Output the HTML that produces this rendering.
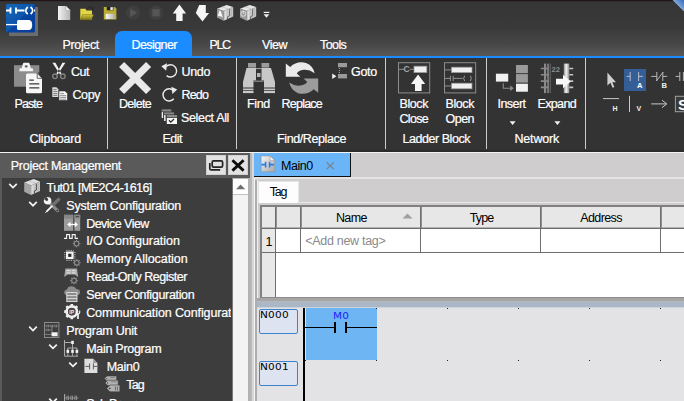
<!DOCTYPE html>
<html lang="en"><head><meta charset="utf-8"><title>Ladder Designer</title>
<style>
html,body{margin:0;padding:0;background:#333333;}
body{width:684px;height:401px;overflow:hidden;font-family:'Liberation Sans',sans-serif;}
#app{position:relative;width:684px;height:401px;overflow:hidden;background:#333333;}
#app div,#app span,#app svg{position:absolute;box-sizing:border-box;}
.t{white-space:pre;line-height:16px;height:16px;-webkit-text-stroke:0.22px currentColor;}
.sep{width:1px;top:58px;height:91px;background:#cdcdcd;}
.hl{background:#6e6e6e;height:1px;}
.vl{background:#6e6e6e;width:1px;}
.dot{width:1px;height:1px;background:#222;}

</style></head><body>
<div id="app">
<!-- title bar + tab row -->
<div style="left:0;top:0;width:684px;height:56px;background:linear-gradient(#353535 0px,#393939 28px,#474747 44px,#595959 56px);"></div>
<div style="left:0;top:0;width:684px;height:1px;background:#1e1514;"></div><div style="left:0;top:1px;width:684px;height:1px;background:#2f2d2d;"></div>
<svg style="left:670px;top:0" width="14" height="14" viewBox="0 0 14 14"><defs><linearGradient id="gTri" x1="0" y1="1" x2="1" y2="0"><stop offset="0.5" stop-color="#86a8d6"/><stop offset="1" stop-color="#2f6cc0"/></linearGradient></defs><path d="M2.5 0H14V11.5Z" fill="url(#gTri)"/></svg>
<div style="left:0;top:56px;width:684px;height:2px;background:#1a8cff;"></div>
<div style="left:115px;top:31px;width:77px;height:26px;background:#1a8cff;border-radius:7px 7px 0 0;"></div>
<!-- ribbon body -->
<div style="left:0;top:58px;width:684px;height:94px;background:#333333;"></div>
<div class="sep" style="left:107px;"></div>
<div class="sep" style="left:236px;"></div>
<div class="sep" style="left:385px;"></div>
<div class="sep" style="left:486px;"></div>
<div class="sep" style="left:585px;"></div>
<div style="left:0;top:150px;width:684px;height:2px;background:#2b2b2b;"></div><div style="left:0;top:152px;width:684px;height:1px;background:#f2f2f2;"></div>
<!-- left panel -->
<div style="left:0;top:153px;width:250px;height:25px;background:#5a5a5a;"></div>
<div style="left:0;top:178px;width:232px;height:223px;background:#3d3d3d;"></div>
<div style="left:0;top:178px;width:2px;height:223px;background:#5a5a5a;"></div>
<div style="left:232px;top:178px;width:18px;height:223px;background:#f3f3f3;border-left:1px solid #777;border-right:2px solid #b2b2b2;border-top:1px solid #b8b8b8;"></div>
<div style="left:233px;top:179px;width:15px;height:15px;background:#fefefe;"></div><div style="left:233px;top:194px;width:15px;height:1px;background:#c4c4c4;"></div>
<svg style="left:235px;top:183px" width="12" height="8" viewBox="0 0 12 8"><path d="M1 6.2L5.6 1.4L10.2 6.2Z" fill="#707070"/></svg>
<div style="left:206px;top:155px;width:20px;height:20px;background:#e2e2e2;border:1px solid #cfcfcf;"></div>
<div style="left:228px;top:155px;width:20px;height:20px;background:#e2e2e2;border:1px solid #cfcfcf;"></div>
<svg style="left:206px;top:155px" width="20" height="20" viewBox="0 0 20 20"><path d="M7.6 5.8h7.6q1.4 0 1.4 1.4v3.6q0 1.4 -1.4 1.4h-7.6q-1.4 0 -1.4 -1.4v-3.6q0 -1.4 1.4 -1.4zM3.8 8v5.4q0 1.4 1.4 1.4h9" fill="none" stroke="#222" stroke-width="1.7"/></svg>
<svg style="left:228px;top:155px" width="20" height="20" viewBox="0 0 20 20"><path d="M4.4 5.2L15.6 15.6M15.6 5.2L4.4 15.6" fill="none" stroke="#0c0c0c" stroke-width="2.8"/></svg>
<!-- splitter -->
<div style="left:250px;top:153px;width:2px;height:248px;background:#b8b8b8;"></div><div style="left:252px;top:153px;width:2px;height:248px;background:#d8d8d8;"></div>
<!-- doc area -->
<div style="left:254px;top:153px;width:430px;height:248px;background:#cfcdcd;"></div>
<div style="left:254px;top:153px;width:97px;height:24px;background:#6ab5f8;border-right:1px solid #111;border-bottom:1px solid #111;"></div>
<div style="left:254px;top:177px;width:430px;height:2px;background:#e4e4e4;"></div>
<div style="left:254px;top:179px;width:1px;height:222px;background:#f4f4f4;"></div><div style="left:255px;top:180px;width:2px;height:221px;background:#adadad;"></div><div style="left:257px;top:180px;width:1px;height:118px;background:#f0f0f0;"></div>
<div style="left:258px;top:181px;width:41px;height:22px;background:#fdfdfd;border:1px solid #e6e6e6;border-bottom:none;"></div>
<div style="left:299px;top:202px;width:385px;height:1px;background:#e8e8e8;"></div>
<!-- table -->
<div style="left:260px;top:205px;width:424px;height:93px;background:#fff;border-top:2px solid #808080;border-left:2px solid #808080;border-bottom:1px solid #8a8a8a;"></div>
<div style="left:262px;top:207px;width:422px;height:21px;background:#e7e7e7;"></div>
<div style="left:262px;top:207px;width:13px;height:90px;background:#e8e8e8;"></div>
<div class="hl" style="left:262px;top:228px;width:422px;"></div><div class="hl" style="left:262px;top:227px;width:422px;background:#b4b4b4"></div>
<div class="hl" style="left:262px;top:252px;width:422px;"></div>
<div class="vl" style="left:275px;top:207px;height:90px;"></div><div class="vl" style="left:276px;top:207px;height:21px;background:#909090"></div>
<div class="vl" style="left:300px;top:207px;height:46px;"></div><div class="vl" style="left:301px;top:207px;height:21px;background:#909090"></div>
<div class="vl" style="left:420px;top:207px;height:46px;"></div><div class="vl" style="left:421px;top:207px;height:21px;background:#909090"></div>
<div class="vl" style="left:540px;top:207px;height:46px;"></div><div class="vl" style="left:541px;top:207px;height:21px;background:#909090"></div>
<div class="vl" style="left:660px;top:207px;height:46px;"></div><div class="vl" style="left:661px;top:207px;height:21px;background:#909090"></div>
<svg style="left:402px;top:213px" width="11" height="6" viewBox="0 0 11 6"><path d="M0.5 5.5L5.5 0.5L10.5 5.5Z" fill="#a0a0a0"/></svg>
<!-- ladder -->
<div style="left:257px;top:298px;width:427px;height:3px;background:#a6a6a6;"></div>
<div style="left:257px;top:301px;width:427px;height:1px;background:#b8b8b8;"></div>
<div style="left:257px;top:302px;width:427px;height:5px;background:#a9b7c7;"></div>
<div style="left:257px;top:307px;width:427px;height:1px;background:#cdd3da;"></div>
<div style="left:257px;top:308px;width:427px;height:93px;background:#e3e3e5;"></div>
<div style="left:306px;top:308px;width:71px;height:52px;background:#6db6f3;"></div><div class="dot" style="left:305px;top:360px"></div>
<div style="left:303px;top:308px;width:2px;height:93px;background:#000;"></div>
<div style="left:259px;top:309px;width:39px;height:25px;background:#dde3f0;border:1px solid #3c82cc;border-radius:2px;"></div>
<div style="left:259px;top:361px;width:39px;height:25px;background:#dde3f0;border:1px solid #3c82cc;border-radius:2px;"></div>
<span class="t" style="left:259.8px;top:309px;font-family:'DejaVu Sans',sans-serif;-webkit-text-stroke:0;font-size:9.4px;line-height:12px;height:12px;color:#000;letter-spacing:0.2px;transform:scaleX(1.12);transform-origin:0 0;">N000</span>
<span class="t" style="left:259.8px;top:361px;font-family:'DejaVu Sans',sans-serif;-webkit-text-stroke:0;font-size:9.4px;line-height:12px;height:12px;color:#000;letter-spacing:0.2px;transform:scaleX(1.12);transform-origin:0 0;">N001</span>
<span class="t" style="left:332.6px;top:312px;font-family:'DejaVu Sans',sans-serif;-webkit-text-stroke:0;font-size:8px;line-height:10px;height:10px;color:#1c1cff;letter-spacing:0.3px;transform:scaleX(1.3);transform-origin:0 0;">M0</span>
<div style="left:305px;top:327px;width:30px;height:1px;background:#000;"></div>
<div style="left:347px;top:327px;width:30px;height:1px;background:#000;"></div>
<div style="left:334px;top:322px;width:2px;height:11px;background:#000;"></div>
<div style="left:345px;top:322px;width:2px;height:11px;background:#000;"></div>
<div class="dot" style="left:376px;top:308px"></div><div class="dot" style="left:447px;top:308px"></div><div class="dot" style="left:518px;top:308px"></div><div class="dot" style="left:589px;top:308px"></div><div class="dot" style="left:660px;top:308px"></div>
<div class="dot" style="left:376px;top:360px"></div><div class="dot" style="left:447px;top:360px"></div><div class="dot" style="left:518px;top:360px"></div><div class="dot" style="left:589px;top:360px"></div><div class="dot" style="left:660px;top:360px"></div>
<svg style="left:0;top:0" width="684" height="152" viewBox="0 0 684 152">
<defs>
<linearGradient id="gApp" x1="0" y1="0" x2="1" y2="1"><stop offset="0" stop-color="#1467b8"/><stop offset="0.5" stop-color="#0d55aa"/><stop offset="0.52" stop-color="#0845a2"/><stop offset="1" stop-color="#063c98"/></linearGradient>
<linearGradient id="gDoc" x1="0" y1="0" x2="1" y2="0"><stop offset="0" stop-color="#f4f4f4"/><stop offset="1" stop-color="#b4b4b4"/></linearGradient>
<linearGradient id="gFold" x1="0" y1="0" x2="0" y2="1"><stop offset="0" stop-color="#d6ca3a"/><stop offset="1" stop-color="#7a721e"/></linearGradient>
<linearGradient id="gLab" x1="0" y1="0" x2="1" y2="0"><stop offset="0" stop-color="#fafafa"/><stop offset="1" stop-color="#b0b0b0"/></linearGradient>
<linearGradient id="gBar" x1="0" y1="0" x2="1" y2="0"><stop offset="0" stop-color="#8a8a8a"/><stop offset="0.45" stop-color="#f4f4f4"/><stop offset="1" stop-color="#8a8a8a"/></linearGradient>
</defs>
<!-- app icon -->
<rect x="9" y="7" width="29" height="29" fill="#6c6c6c"/>
<rect x="6" y="4" width="29" height="28.5" rx="1.5" fill="url(#gApp)"/>
<g stroke="#fff" stroke-width="1.8" fill="none">
<path d="M6 10.5H10.5M10.5 7.5V13.5M16 7.5V13.5M16 10.5H24.5M34 10.5H35"/>
<path d="M27.8 7Q23.6 10.5 27.8 14M30.6 7Q34.8 10.5 30.6 14" stroke-width="1.7"/>
<path d="M6 24.6H17.5" stroke-width="1.3"/>
</g>
<path d="M18.5 20H28.5Q32.2 20 32.2 25Q32.2 30 28.5 30H18.5Q17 30 17 28.5V21.5Q17 20 18.5 20Z" fill="#fff"/>
<!-- new doc -->
<path d="M58 6H66L70.2 10.2V20H58Z" fill="url(#gDoc)"/>
<path d="M66 6V10.2H70.2Z" fill="#fafafa" stroke="#8a8a8a" stroke-width="0.4"/>
<!-- open folder -->
<path d="M80.3 8.8H85.5L86.5 10.6H92V20H80.3Z" fill="#e2d644"/>
<path d="M82.6 14.6H93.6L91.4 20H80.3Z" fill="url(#gFold)" stroke="#5a5418" stroke-width="0.4"/>
<path d="M87 8.5Q89.5 5.5 92 8.2" fill="none" stroke="#2a2a2a" stroke-width="1.1"/>
<path d="M90.6 9.8L94 6.5V9.8Z" fill="#2a2a2a"/>
<!-- save -->
<path d="M103.8 7H114.8L116.4 8.6V19.4H103.8Z" fill="#b9ac32"/>
<rect x="106.8" y="7" width="6.6" height="3.3" fill="#222"/>
<rect x="110.4" y="7.2" width="2.4" height="2.8" fill="#f0f0f0"/>
<rect x="105.7" y="13.8" width="8.9" height="5.2" fill="url(#gLab)"/>
<!-- play / stop disabled -->
<circle cx="133.1" cy="12.8" r="7.2" fill="#3f3f3f"/>
<path d="M130.2 8.7L137.3 12.8L130.2 16.9Z" fill="#565656"/>
<circle cx="156" cy="12.8" r="7.2" fill="#3f3f3f"/>
<rect x="152.3" y="9.1" width="7.3" height="7.3" fill="#565656"/>
<!-- up / down arrows -->
<path d="M179.4 4.6L186.1 13.4H182.6V21H176.2V13.4H172.8Z" fill="#f6f6f6"/>
<path d="M199.2 5H205.8V13H209.1L202.5 21.4L195.8 13Z" fill="#f6f6f6"/>
<!-- plc icons -->
<g id="plc">
<path d="M217 8.7L226.6 4.9L233.2 7.1L223.7 11.1Z" fill="#e6e6e6"/>
<path d="M217 8.7L223.7 11.1V20.7L217 17.6Z" fill="#9c9c9c"/>
<path d="M223.7 11.1L233.2 7.1V16.6L223.7 20.7Z" fill="#c8c8c8"/>
<path d="M222 6.8L228.6 9" stroke="#bdbdbd" stroke-width="0.7"/>
<path d="M225.6 10.6V19.6" stroke="#e8e8e8" stroke-width="0.8"/>
<path d="M229.6 9.2V15.8L227.6 16.7V19" stroke="#6a6a6a" stroke-width="1" fill="none"/>
<path d="M231.6 8.2V16.4" stroke="#b0b0b0" stroke-width="0.7"/>
</g>
<path d="M219.8 10.4Q221 10.6 221.4 13.4L222.8 16.9L217.6 15.6L218.8 13.2Q218.8 10.8 219.8 10.4Z" fill="#fafafa"/>
<use href="#plc" x="23"/>
<circle cx="243.3" cy="13.8" r="2.5" fill="none" stroke="#dcdcdc" stroke-width="1"/>
<path d="M243.3 11.4V13.9" stroke="#dcdcdc" stroke-width="0.9"/>
<!-- qat dropdown -->
<rect x="263.7" y="11.8" width="5.6" height="1.2" fill="#f0f0f0"/>
<path d="M263.6 14.3H269.4L266.5 17.8Z" fill="#f0f0f0"/>
</svg>
<svg style="left:0;top:0" width="684" height="152" viewBox="0 0 684 152">
<!-- paste -->
<rect x="14" y="65.2" width="25.3" height="21.5" fill="#8c8c8c"/>
<path d="M19.4 71.2V69.4Q19.4 68.2 20.6 68.2H21.7L22.9 63.7Q23.2 62.7 24.2 62.7H28.3Q29.3 62.7 29.6 63.7L30.8 68.2H31.9Q33.1 68.2 33.1 69.4V71.2Z" fill="#f4f4f4"/>
<ellipse cx="26.2" cy="66.4" rx="1.5" ry="1.1" fill="#5a5a5a"/>
<path d="M27.5 73.5H37L42 78.5V91.8Q42 93.3 40.5 93.3H27.5Q26 93.3 26 91.8V75Q26 73.5 27.5 73.5Z" fill="#f6f6f6"/>
<path d="M37.2 73.3V78.3H42.2Z" fill="#f6f6f6" stroke="#444" stroke-width="0.8"/><path d="M37.6 72.6L42.8 77.8V72.6Z" fill="#333"/>
<path d="M29.3 80.1H33.8M29.3 83.8H39.3M29.3 87.9H39.3" stroke="#3a3a3a" stroke-width="1.3"/>
<!-- cut -->
<path d="M52.4 62.8H55.4L61.4 73.6L60 74.6ZM65.4 62.8H62.4L56.4 73.6L57.8 74.6Z" fill="#f0f0f0"/><circle cx="58.9" cy="70.6" r="0.55" fill="#555"/>
<circle cx="55" cy="76.3" r="2.3" fill="none" stroke="#828282" stroke-width="1.4"/>
<circle cx="62.8" cy="76.3" r="2.3" fill="none" stroke="#828282" stroke-width="1.4"/>
<!-- copy -->
<path d="M52.3 87.3H56.4L58.4 89.3V96.9H52.3Z" fill="#dcdcdc"/>
<path d="M53.4 89.5H56.6M53.4 91.5H57.3M53.4 93.5H57.3M53.4 95.4H57.3" stroke="#555" stroke-width="0.7"/>
<path d="M58.9 90.9H65L67.5 93.4V100.5H58.9Z" fill="#f2f2f2" stroke="#2e2e2e" stroke-width="0.6"/>
<path d="M60.2 93.6H64M60.2 95.6H66.2M60.2 97.4H66.2M60.2 99.2H66.2" stroke="#666" stroke-width="0.7"/>
<!-- delete X -->
<path d="M121.6 64.5L148.6 91.5M148.6 64.5L121.6 91.5" stroke="#e9e9e9" stroke-width="7.2" stroke-linejoin="round"/>
<!-- undo -->
<path d="M166.2 66.6A6.1 6.1 0 1 1 166.6 75.6" fill="none" stroke="#eaeaea" stroke-width="1.4"/>
<path d="M161.3 66.2L167 63.3L166.2 70.7Z" fill="#eaeaea"/>
<!-- redo -->
<path d="M173.4 90.5A6.1 6.1 0 1 0 173.8 98.8" fill="none" stroke="#eaeaea" stroke-width="1.4"/>
<path d="M177.2 89.6L171.4 86.7L172.4 94Z" fill="#eaeaea"/>
<!-- select all -->
<rect x="161.7" y="109.4" width="9.6" height="2.1" fill="#8a8a8a"/><rect x="161.7" y="112.1" width="1.4" height="5.9" fill="#f0f0f0"/>
<rect x="164.1" y="112.4" width="9.9" height="2" fill="#8a8a8a"/><rect x="164.1" y="115" width="1.5" height="6" fill="#f0f0f0"/>
<rect x="166.8" y="115" width="10.2" height="2.2" fill="#8a8a8a"/>
<rect x="166.8" y="117.9" width="10.2" height="6.1" fill="#f6f6f6"/>
<path d="M169 120.3L170.8 122.1L174 119" fill="none" stroke="#2a2a2a" stroke-width="1.3"/>
<!-- find binoculars -->
<rect x="248" y="63" width="8" height="4.6" fill="#9c9c9c"/><rect x="261.5" y="63" width="7.7" height="4.6" fill="#9c9c9c"/>
<g fill="#c8c8c8">
<path d="M246.5 68H256V80.5H253.5V87.4H243V82Z"/>
<path d="M271 68H261.5V80.5H264V87.4H275V82Z"/>
<rect x="243" y="88.5" width="10.5" height="1.6"/><rect x="264" y="88.5" width="11" height="1.6"/>
<rect x="243" y="90.8" width="10.5" height="2.3"/><rect x="264" y="90.8" width="11" height="2.3"/>
</g>
<rect x="256" y="68" width="5.5" height="1.1" fill="#9a9a9a"/>
<rect x="257" y="73" width="3.5" height="4" fill="#b4b4b4"/>
<rect x="254" y="80.5" width="9.5" height="1.5" fill="#7c7c7c"/>
<!-- replace -->
<path d="M285.8 76.8V63.4L290.2 67Q297 60.6 306 63Q313 65.6 314.6 73.2Q309.4 69.2 303.6 69.8Q298.6 70.6 296.8 73.4L300.4 76.8Z" fill="#eaeaea"/>
<path d="M318.2 78.4V92.8L313.8 89.2Q307 95.6 298 93.2Q291 90.4 289.2 82.6Q294.6 86.4 300.4 85.6Q305.4 84.8 307.2 82L303.6 78.4Z" fill="#9c9c9c"/>
<!-- goto -->
<rect x="338" y="63" width="9" height="4.2" fill="#9a9a9a"/><rect x="338" y="74" width="9" height="4.4" fill="#9a9a9a"/>
<path d="M332.2 73.4L336.4 76.2L332.2 79Z" fill="#f2f2f2"/>
<path d="M339.4 68V73.4" stroke="#bbb" stroke-width="0.9" stroke-dasharray="1 1"/>
<!-- block close -->
<rect x="398.5" y="62.7" width="31.2" height="30.2" fill="none" stroke="#8c8c8c" stroke-width="1"/>
<path d="M399 69.3H404M409.8 69.3H413.6" stroke="#9a9a9a" stroke-width="0.9"/>
<text x="403.6" y="72.3" font-family="'Liberation Sans',sans-serif" font-size="8.5" font-weight="bold" fill="#a6a6a6">C</text>
<rect x="414" y="66.2" width="12.8" height="6.4" fill="#f0f0f0" stroke="#9a9a9a" stroke-width="0.8"/>
<path d="M418.1 74.6L425.2 84H421.6V91H415V84H411Z" fill="#f6f6f6"/>
<!-- block open -->
<rect x="444.5" y="62.7" width="31.2" height="30.2" fill="none" stroke="#8c8c8c" stroke-width="1"/>
<rect x="451.6" y="67.2" width="20.4" height="5.4" fill="#f0f0f0" stroke="#9a9a9a" stroke-width="0.8"/>
<rect x="451.6" y="83.2" width="20.4" height="5.6" fill="#f0f0f0" stroke="#9a9a9a" stroke-width="0.8"/>
<path d="M445 69.9H451.4M445 86H451.4M445 78.4H450.4M453.2 78.4H462.6M450.4 75.8V81M453.2 75.8V81" stroke="#9a9a9a" stroke-width="0.9" fill="none"/>
<path d="M464.6 75.8Q462.8 78.4 464.6 81M470.4 75.8Q472.2 78.4 470.4 81" stroke="#a6a6a6" stroke-width="0.9" fill="none"/>
<!-- insert -->
<rect x="495.9" y="73.7" width="12.3" height="7.9" fill="#f2f2f2"/>
<rect x="516" y="65" width="11.9" height="8.2" fill="#9a9a9a"/><rect x="516" y="74.1" width="11.9" height="8.5" fill="#9a9a9a"/><rect x="516" y="83.7" width="11.9" height="8" fill="#f2f2f2"/>
<path d="M503.3 83.2V88.2H511" fill="none" stroke="#8a8a8a" stroke-width="1.1"/>
<path d="M510.2 85.4L513.8 88.2L510.2 91Z" fill="#8a8a8a"/>
<!-- expand -->
<rect x="544" y="63.6" width="2.1" height="29.5" fill="#8a8a8a"/><rect x="547.3" y="63.6" width="1.5" height="29.5" fill="#8a8a8a"/><rect x="549.7" y="63.6" width="1" height="29.5" fill="#6a6a6a"/>
<path d="M540.8 68.5H548.8M540.8 74.8H548.8M540.8 81.1H548.8M540.8 87.4H548.8" stroke="#8a8a8a" stroke-width="1.6"/>
<text x="551.6" y="71.8" font-family="'Liberation Sans',sans-serif" font-size="7.6" font-weight="bold" fill="#8c8c8c">22</text>
<rect x="563.7" y="63.6" width="5.6" height="29.5" fill="url(#gBar)"/>
<path d="M569.3 68.5H573.2M569.3 74.8H573.2M569.3 81.1H573.2M569.3 87.4H573.2" stroke="#c4c4c4" stroke-width="1.6"/>
<path d="M556 78.8H563V74.8L570.8 81.6L563 88.3V84.6H556Z" fill="#f8f8f8"/>
<!-- dropdown arrows -->
<path d="M509.6 121.3H515.6L512.6 125Z" fill="#f2f2f2"/>
<path d="M554.4 121.3H560.4L557.4 125Z" fill="#f2f2f2"/>
<!-- tool palette -->
<path d="M607.4 72.6V85.6L610.4 82.8L612.6 87.8L614.4 87L612.3 82.2H616Z" fill="#d0d0d0"/>
<rect x="624" y="69" width="22" height="22" fill="#355e96"/>
<path d="M626.7 76.4H630.2M638.6 76.4H642.8M630.2 72V81M638.6 72V81" stroke="#b4bccb" stroke-width="1" fill="none"/>
<text x="637" y="88.4" font-family="'Liberation Sans',sans-serif" font-size="7.6" font-weight="bold" fill="#fff">A</text>
<path d="M651.2 76.4H656.8M662.8 76.4H667.2M656.8 72V81M662.8 72V81M663.2 72L656.4 81" stroke="#b8b8b8" stroke-width="1" fill="none"/>
<text x="661.4" y="88.4" font-family="'Liberation Sans',sans-serif" font-size="7.6" font-weight="bold" fill="#f0f0f0">B</text>
<path d="M675.6 76.4H679.8M679.8 72V81M683.4 72V81" stroke="#b8b8b8" stroke-width="1" fill="none"/>
<path d="M603 98.6H619" stroke="#c8c8c8" stroke-width="1"/>
<text x="612.6" y="111" font-family="'Liberation Sans',sans-serif" font-size="7" font-weight="bold" fill="#f0f0f0">H</text>
<path d="M629.5 95.8V112" stroke="#c8c8c8" stroke-width="1"/>
<text x="636.6" y="111" font-family="'Liberation Sans',sans-serif" font-size="7" font-weight="bold" fill="#f0f0f0">V</text>
<path d="M651.2 103.9H666.6M662 100.2L666.8 103.9L662 107.6" stroke="#c8c8c8" stroke-width="1" fill="none"/>
<rect x="675.4" y="96.3" width="12" height="15.4" fill="#3a3a3a" stroke="#a0a0a0" stroke-width="1"/>
<text x="678" y="109.6" font-family="'Liberation Sans',sans-serif" font-size="15" font-weight="bold" fill="#fff">S</text>
</svg>
<svg style="left:0;top:153px" width="232" height="248" viewBox="0 153 232 248">
<g fill="none" stroke="#f2f2f2" stroke-width="1.7">
<path d="M9.2 183.8L13 187.6L16.8 183.8"/>
<path d="M29.2 201.9L33 205.7L36.8 201.9"/>
<path d="M29.2 326.7L33 330.5L36.8 326.7"/>
<path d="M49.2 344.6L53 348.4L56.8 344.6"/>
<path d="M69.2 362.6L73 366.4L76.8 362.6"/>
<path d="M49.2 398.6L53 402.4L56.8 398.6"/>
</g>
<!-- plc box -->
<path d="M24.2 182.6L33.6 179L40 181.4L31 185.4Z" fill="#dedede"/>
<path d="M24.2 182.6L31 185.4V195L24.2 191.8Z" fill="#a6a6a6"/>
<path d="M31 185.4L40 181.4V191L31 195Z" fill="#c6c6c6"/>
<path d="M29 180.8L35.6 183.4" stroke="#b8b8b8" stroke-width="0.7"/>
<path d="M32.8 185V193.8" stroke="#e6e6e6" stroke-width="0.8"/>
<path d="M36.4 183.6V190L34.4 190.9V193.4" stroke="#4c4c4c" stroke-width="1" fill="none"/>
<path d="M38.4 182.6V190.8" stroke="#adadad" stroke-width="0.7"/>
<!-- tools -->
<path d="M49.6 203L57.6 210.6" stroke="#8c8c8c" stroke-width="3.2" stroke-linecap="round"/>
<circle cx="57.4" cy="210.4" r="0.9" fill="#3c3c3c"/>
<circle cx="47.6" cy="200.8" r="3.8" fill="#f4f4f4"/>
<path d="M43.6 199.4L46.2 196.6L48.2 199.2Q48.4 200.8 46.8 201Q45.2 201 45 199.6Z" fill="#3c3c3c"/>
<path d="M58.6 199.4L53 204.8" stroke="#707070" stroke-width="3.5" stroke-linecap="round"/>
<path d="M52 206.2L47 211.2" stroke="#f4f4f4" stroke-width="1.8" stroke-linecap="round"/>
<path d="M47.4 210.8L45.6 212.6" stroke="#f4f4f4" stroke-width="1" stroke-linecap="round"/>
<!-- device view -->
<rect x="64" y="214.8" width="9.2" height="16" fill="#9c9c9c"/><rect x="74.4" y="214.8" width="5.8" height="16" fill="#9c9c9c"/>
<rect x="64" y="214.8" width="9.2" height="3.8" fill="#868686"/><rect x="74.4" y="214.8" width="5.8" height="3.8" fill="#868686"/>
<rect x="75.6" y="216" width="3.4" height="1.2" fill="#4a4a4a"/>
<path d="M69.6 224.5H75.6" stroke="#fff" stroke-width="1.4"/>
<path d="M67.2 224.5L70.4 221.8V227.2ZM78 224.5L74.8 221.8V227.2Z" fill="#fff"/>
<!-- io config -->
<path d="M64 238.4H66.6V234.6H69.6V238.4H72.2V234.6H75.2V238.4H78" fill="none" stroke="#f2f2f2" stroke-width="1.1"/>
<g id="gear"><circle cx="76.5" cy="243.6" r="2.3" fill="none" stroke="#8e8e8e" stroke-width="1.05"/>
<path d="M76.5 239.8V240.9M76.5 246.3V247.4M72.7 243.6H73.8M79.2 243.6H80.3M73.8 240.9L74.6 241.7M78.4 245.5L79.2 246.3M79.2 240.9L78.4 241.7M73.8 246.3L74.6 245.5" stroke="#8e8e8e" stroke-width="1.05"/></g>
<!-- memory -->
<rect x="66" y="251.5" width="7.6" height="7.6" fill="#f4f4f4"/><rect x="68.2" y="253.7" width="3.2" height="3.2" fill="#2a2a2a"/>
<path d="M66.4 250.4H73.6M66.4 260.4H73.6" stroke="#d0d0d0" stroke-width="1" stroke-dasharray="1 1.2"/>
<path d="M64.8 252H64.8V259M74.9 252V259" stroke="#d0d0d0" stroke-width="1" stroke-dasharray="1 1.2"/>
<use href="#gear" x="0.3" y="19.2"/>
<!-- read-only register -->
<path d="M65.4 268.6H77L78.2 277L74.6 274.6H67.6L64.2 277Z" fill="#a8a8a8"/>
<rect x="66.6" y="270" width="3.8" height="3.6" fill="#dedede"/><rect x="71.8" y="270" width="3.8" height="3.6" fill="#dedede"/>
<path d="M66.6 271.8H70.4M71.8 271.8H75.6" stroke="#8a8a8a" stroke-width="0.7"/>
<use href="#gear" x="-2.5" y="37"/>
<!-- server -->
<path d="M67.2 295Q64.2 295 64.2 292.2Q64.4 289.8 67 289.6Q67.6 286.2 71.6 286.2Q75 286.2 76.2 289Q80 289 80 292.2Q80 295 77 295Z" fill="#8c8c8c"/>
<rect x="66.8" y="292.6" width="10.2" height="9" fill="#8a8a8a" stroke="#e4e4e4" stroke-width="0.9"/>
<path d="M66.8 295.6H77M66.8 298.6H77" stroke="#e4e4e4" stroke-width="0.9"/>
<!-- comm gear -->
<circle cx="71.8" cy="311.6" r="5.2" fill="none" stroke="#f0f0f0" stroke-width="2.6"/>
<g stroke="#f0f0f0" stroke-width="2.6"><path d="M71.8 304V306M71.8 317.2V319.2M64.2 311.6H66.2M66.4 306.2L67.8 307.6M66.4 317L67.8 315.6M77.2 306.2L75.8 307.6"/></g>
<circle cx="71.8" cy="311.6" r="3.7" fill="#4a4a4a"/>
<text x="69.3" y="313.5" font-family="'Liberation Sans',sans-serif" font-size="5" font-weight="bold" fill="#f0f0f0">IP</text>
<path d="M78 313.4V319" stroke="#f4f4f4" stroke-width="1.7"/>
<path d="M76.3 310.4V312.6Q76.3 314 78 314Q79.7 314 79.7 312.6V310.4" fill="none" stroke="#f4f4f4" stroke-width="1.1"/>
<!-- program unit -->
<rect x="44.5" y="322.5" width="14.4" height="15" fill="none" stroke="#8a8a8a" stroke-width="1"/>
<path d="M45 326H47M48.4 326H51M52.4 326H55M56.4 326H58.4M47 324.6V327.4M48.4 324.6V327.4M51 324.6V327.4M52.4 324.6V327.4M55 324.6V327.4M56.4 324.6V327.4M45 330H47M48.4 330H52M47 328.6V331.4M48.4 328.6V331.4M52 326V334.4M45 334.4H52" stroke="#9a9a9a" stroke-width="0.7" fill="none"/>
<rect x="51.6" y="332.3" width="6" height="4" fill="#f4f4f4"/>
<!-- main program -->
<path d="M64.5 340V356.2H78M64.5 342.5H71.4M72.5 344V350M67.8 350V348H76.9V350" fill="none" stroke="#b8b8b8" stroke-width="0.9"/>
<rect x="71.2" y="340.8" width="2.6" height="3.2" fill="#f4f4f4"/>
<rect x="66.5" y="349.8" width="2.6" height="3.1" fill="#f4f4f4"/><rect x="71.2" y="349.8" width="2.6" height="3.1" fill="#f4f4f4"/><rect x="75.6" y="349.8" width="2.6" height="3.1" fill="#f4f4f4"/>
<path d="M67.8 353V356M72.5 353V356M76.9 353V356" stroke="#b8b8b8" stroke-width="0.8"/>
<!-- main0 doc -->
<path d="M84.4 358.8H93.2L97.4 363V373H84.4Z" fill="#dedede"/>
<path d="M93.2 358.8V363H97.4Z" fill="#9a9a9a"/>
<path d="M85.4 366.4H89.6M93.4 366.4H97M89.6 363.4V369.4M93.4 363.4V369.4" stroke="#505050" stroke-width="0.9"/>
<!-- tag icon -->
<g fill="#b2b2b2" stroke="#3d3d3d" stroke-width="0.6" stroke-linejoin="round">
<path d="M107 376H116.6V381.2H107L104.4 378.6Z"/>
<path d="M107.8 380.2H118.2V385.6H107.8L105 382.9Z"/>
<path d="M110 385H119.8V391.8H110L106.8 388.4Z"/>
</g>
<circle cx="109.8" cy="388.4" r="0.8" fill="#3c3c3c"/><circle cx="107.6" cy="382.9" r="0.6" fill="#3c3c3c"/><circle cx="106.8" cy="378.6" r="0.6" fill="#3c3c3c"/>
<path d="M115.4 386.6V390.4M117.4 386.6V390.4" stroke="#555" stroke-width="0.8"/>
<path d="M110 377.6H115M111 381.8H116.6" stroke="#777" stroke-width="0.8"/>
<!-- sub program icon -->
<path d="M64.6 394V401" stroke="#b0b0b0" stroke-width="1"/>
<path d="M65 398H67M68.4 398H71M72.4 398H75M76.4 398H78.4M67 395.6V400M68.4 395.6V400M71 395.6V400M72.4 395.6V400M75 395.6V400M76.4 395.6V400" stroke="#a8a8a8" stroke-width="0.8" fill="none"/>
</svg>
<svg style="left:254px;top:153px" width="100" height="24" viewBox="254 153 100 24">
<defs><linearGradient id="gDoc2" x1="0" y1="0" x2="1" y2="1"><stop offset="0" stop-color="#f6f6f6"/><stop offset="1" stop-color="#a8a8a8"/></linearGradient></defs>
<path d="M261.2 156H270.2L274.7 160.4V171.7H261.2Z" fill="url(#gDoc2)" stroke="#8a8a8a" stroke-width="0.5"/>
<path d="M270.2 156V160.4H274.7Z" fill="#fafafa" stroke="#8a8a8a" stroke-width="0.5"/>
<path d="M261.4 164.6H265.6M269.6 164.6H274M265.6 161.8V167.4M269.6 161.8V167.4" stroke="#2a7de0" stroke-width="1.6"/>
<path d="M326.6 162.4L333.8 169.2M333.8 162.4L326.6 169.2" stroke="#7c7c7c" stroke-width="1.1"/>
</svg>

<span class="t" style="left:62.50px;top:36.67px;font-size:12.5px;letter-spacing:-0.344px;color:#ffffff;">Project</span>
<span class="t" style="left:131.60px;top:36.67px;font-size:12.5px;letter-spacing:-0.604px;color:#ffffff;">Designer</span>
<span class="t" style="left:209.60px;top:36.67px;font-size:12.5px;letter-spacing:-1.409px;color:#ffffff;">PLC</span>
<span class="t" style="left:262.00px;top:36.67px;font-size:12.5px;letter-spacing:-0.469px;color:#ffffff;">View</span>
<span class="t" style="left:320.00px;top:36.67px;font-size:12.5px;letter-spacing:-0.577px;color:#ffffff;">Tools</span>
<span class="t" style="left:14.50px;top:95.67px;font-size:12.5px;letter-spacing:-0.894px;color:#ffffff;">Paste</span>
<span class="t" style="left:71.00px;top:63.67px;font-size:12.5px;letter-spacing:-0.484px;color:#ffffff;">Cut</span>
<span class="t" style="left:72.50px;top:86.67px;font-size:12.5px;letter-spacing:-0.422px;color:#ffffff;">Copy</span>
<span class="t" style="left:29.50px;top:130.67px;font-size:12.5px;letter-spacing:-0.224px;color:#ffffff;">Clipboard</span>
<span class="t" style="left:119.00px;top:95.67px;font-size:12.5px;letter-spacing:-0.690px;color:#ffffff;">Delete</span>
<span class="t" style="left:181.50px;top:63.67px;font-size:12.5px;letter-spacing:-0.348px;color:#ffffff;">Undo</span>
<span class="t" style="left:181.50px;top:86.67px;font-size:12.5px;letter-spacing:-0.848px;color:#ffffff;">Redo</span>
<span class="t" style="left:181.00px;top:109.67px;font-size:12.5px;letter-spacing:-0.342px;color:#ffffff;">Select All</span>
<span class="t" style="left:162.50px;top:130.67px;font-size:12.5px;letter-spacing:-0.512px;color:#ffffff;">Edit</span>
<span class="t" style="left:247.00px;top:95.67px;font-size:12.5px;letter-spacing:-0.332px;color:#ffffff;">Find</span>
<span class="t" style="left:281.50px;top:95.67px;font-size:12.5px;letter-spacing:-0.768px;color:#ffffff;">Replace</span>
<span class="t" style="left:277.00px;top:130.67px;font-size:12.5px;letter-spacing:-0.388px;color:#ffffff;">Find/Replace</span>
<span class="t" style="left:351.00px;top:63.67px;font-size:12.5px;letter-spacing:-0.277px;color:#ffffff;">Goto</span>
<span class="t" style="left:399.50px;top:95.67px;font-size:12.5px;letter-spacing:-0.416px;color:#ffffff;">Block</span>
<span class="t" style="left:399.50px;top:110.67px;font-size:12.5px;letter-spacing:-0.694px;color:#ffffff;">Close</span>
<span class="t" style="left:445.50px;top:95.67px;font-size:12.5px;letter-spacing:-0.416px;color:#ffffff;">Block</span>
<span class="t" style="left:445.50px;top:110.67px;font-size:12.5px;letter-spacing:-0.523px;color:#ffffff;">Open</span>
<span class="t" style="left:402.50px;top:130.67px;font-size:12.5px;letter-spacing:-0.456px;color:#ffffff;">Ladder Block</span>
<span class="t" style="left:497.50px;top:95.67px;font-size:12.5px;letter-spacing:-0.544px;color:#ffffff;">Insert</span>
<span class="t" style="left:537.50px;top:95.67px;font-size:12.5px;letter-spacing:-0.651px;color:#ffffff;">Expand</span>
<span class="t" style="left:514.50px;top:130.67px;font-size:12.5px;letter-spacing:-0.192px;color:#ffffff;">Network</span>
<span class="t" style="left:10.80px;top:157.67px;font-size:12.5px;letter-spacing:-0.286px;color:#ffffff;">Project Management</span>
<span class="t" style="left:46.60px;top:179.67px;font-size:12.5px;letter-spacing:-0.582px;color:#ffffff;">Tut01 [ME2C4-1616]</span>
<span class="t" style="left:66.30px;top:197.67px;font-size:12.5px;letter-spacing:-0.241px;color:#ffffff;">System Configuration</span>
<span class="t" style="left:86.20px;top:215.67px;font-size:12.5px;letter-spacing:-0.542px;color:#ffffff;">Device View</span>
<span class="t" style="left:86.20px;top:232.67px;font-size:12.5px;letter-spacing:-0.053px;color:#ffffff;">I/O Configuration</span>
<span class="t" style="left:86.20px;top:250.67px;font-size:12.5px;letter-spacing:-0.037px;color:#ffffff;">Memory Allocation</span>
<span class="t" style="left:86.20px;top:268.67px;font-size:12.5px;letter-spacing:-0.509px;color:#ffffff;">Read-Only Register</span>
<span class="t" style="left:86.20px;top:286.67px;font-size:12.5px;letter-spacing:-0.323px;color:#ffffff;">Server Configuration</span>
<span class="t" style="left:86.20px;top:304.67px;font-size:12.5px;letter-spacing:-0.112px;color:#ffffff;width:145.3px;overflow:hidden;">Communication Configuration</span>
<span class="t" style="left:66.30px;top:322.67px;font-size:12.5px;letter-spacing:-0.245px;color:#ffffff;">Program Unit</span>
<span class="t" style="left:86.20px;top:340.67px;font-size:12.5px;letter-spacing:-0.283px;color:#ffffff;">Main Program</span>
<span class="t" style="left:106.70px;top:358.67px;font-size:12.5px;letter-spacing:-0.269px;color:#ffffff;">Main0</span>
<span class="t" style="left:126.30px;top:376.67px;font-size:12.5px;letter-spacing:-0.885px;color:#ffffff;">Tag</span>
<span class="t" style="left:86.20px;top:395.67px;font-size:12.5px;letter-spacing:-0.714px;color:#ffffff;">Sub Program</span>
<span class="t" style="left:281.00px;top:157.67px;font-size:12.5px;letter-spacing:-0.469px;color:#000;-webkit-text-stroke:0;">Main0</span>
<span class="t" style="left:269.70px;top:183.67px;font-size:12.5px;letter-spacing:-1.152px;color:#000;-webkit-text-stroke:0;">Tag</span>
<span class="t" style="left:336.00px;top:209.67px;font-size:12.5px;letter-spacing:-0.661px;color:#000;-webkit-text-stroke:0;">Name</span>
<span class="t" style="left:469.70px;top:209.67px;font-size:12.5px;letter-spacing:-0.827px;color:#000;-webkit-text-stroke:0;">Type</span>
<span class="t" style="left:580.30px;top:209.67px;font-size:12.5px;letter-spacing:-0.623px;color:#000;-webkit-text-stroke:0;">Address</span>
<span class="t" style="left:265.50px;top:233.67px;font-size:12.5px;letter-spacing:-2.453px;color:#000;-webkit-text-stroke:0;">1</span>
<span class="t" style="left:305.20px;top:232.67px;font-size:12.5px;letter-spacing:-0.293px;color:#8a8a8a;-webkit-text-stroke:0;">&lt;Add new tag&gt;</span>
</div>
</body></html>
